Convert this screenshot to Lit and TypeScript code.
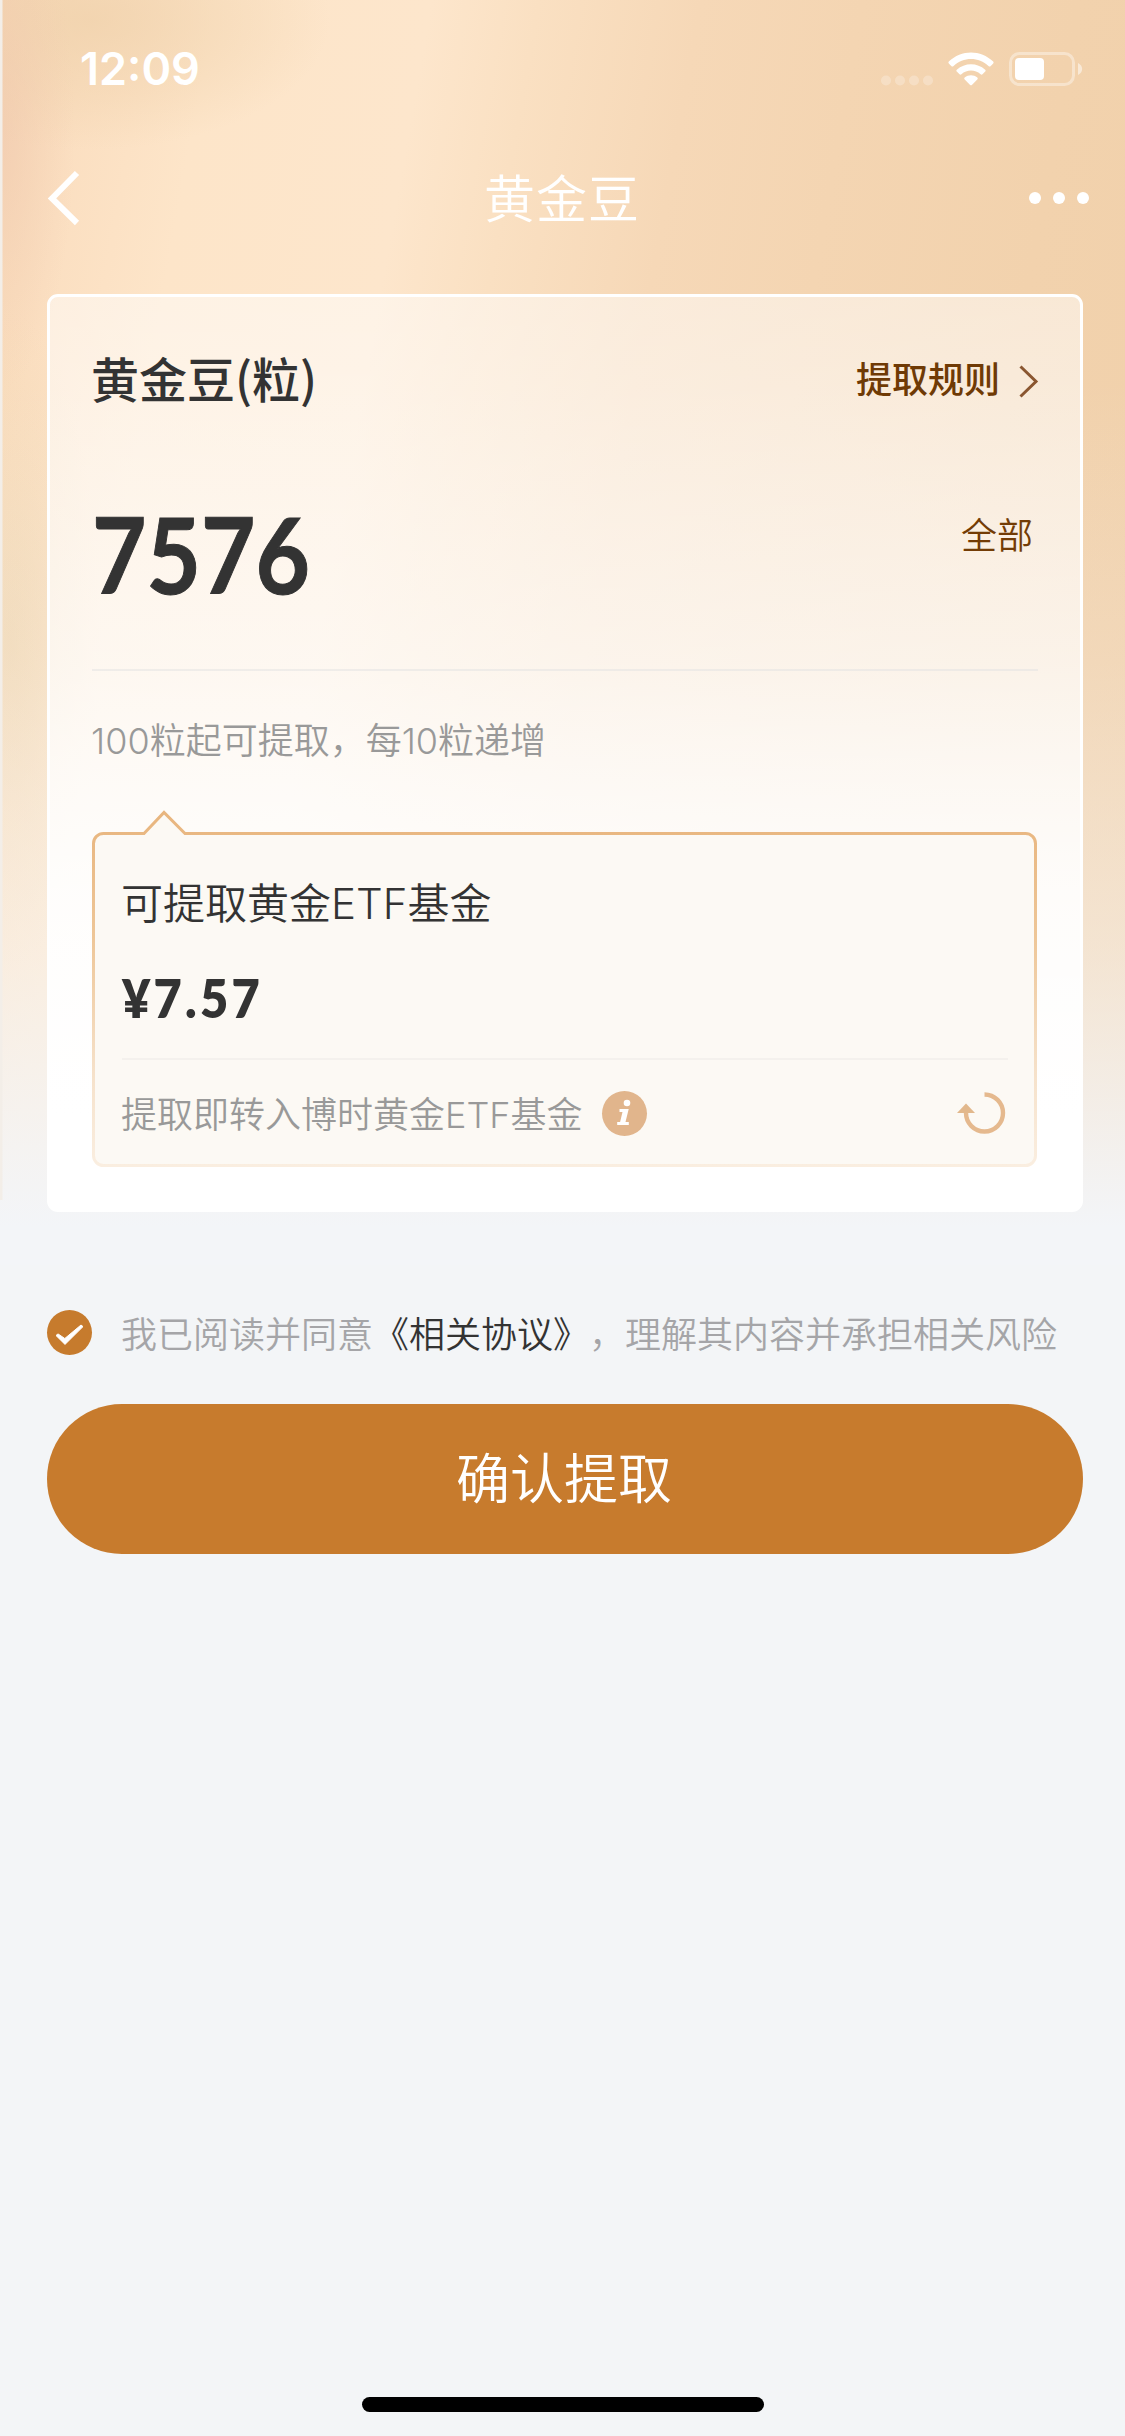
import { LitElement, html, css, svg } from "lit";
import { customElement, property } from "lit/decorators.js";

const icons = {
  cell: svg`<g fill="#fff" opacity=".25"><circle cx="5" cy="28.500" r="5"/><circle cx="19" cy="28.500" r="5"/><circle cx="33" cy="28.500" r="5"/><circle cx="47" cy="28.500" r="5"/></g>`,
  wifi: svg`<g fill="#fff"><path d="M.8 9.600C13.200-2.700 32.800-2.700 45.200 9.600q.9 1 0 1.900l-2.700 2.700q-.9.8-1.800 0C30.600 4.700 15.400 4.700 5.300 14.200q-.9.8-1.800 0L.8 11.500q-.9-.9 0-1.900z"/><path d="M8.800 17.700c8-7.400 20.400-7.400 28.400 0 .6.600.6 1.300 0 1.900l-2.700 2.600c-.6.600-1.300.6-1.900 0-5.500-4.900-13.700-4.900-19.200 0-.6.600-1.300.6-1.900 0l-2.700-2.600c-.6-.6-.6-1.300 0-1.900z"/><path d="M16.700 25.600c3.600-3 9-3 12.600 0 .6.500.6 1.300 0 1.900l-5.400 5.400c-.6.600-1.200.6-1.800 0l-5.400-5.400c-.6-.6-.6-1.400 0-1.900z"/></g>`,
  battery: svg`<rect x="1.500" y="1.500" width="63" height="31" rx="9" fill="none" stroke="#fff" stroke-width="3" opacity=".38"/><rect x="6" y="6" width="29" height="22" rx="4" fill="#fff"/><path d="M69 11c5.500 2.500 5.500 9.500 0 12z" fill="#fff" opacity=".5"/>`,
  back: svg`<path d="M29 2L4 27.500 29 52" fill="none" stroke="#fff" stroke-width="6"/>`,
  more: svg`<g fill="#fff"><circle cx="6" cy="6" r="6"/><circle cx="30" cy="6" r="6"/><circle cx="54" cy="6" r="6"/></g>`,
  arrow: svg`<path d="M1.500 1.500L17 16.500 1.500 31.500" fill="none" stroke="#8a5630" stroke-width="3"/>`,
  info: svg`<circle cx="22.500" cy="22.500" r="22.500" fill="#e1b58c"/><circle cx="25" cy="12" r="3.300" fill="#fff"/><path d="M17.500 18h9.200l-3.200 13h3.300v3H15.200v-3h2.900l2.400-10h-3z" fill="#fff"/>`,
  refresh: svg`<path d="M27.500 2.500A18.500 18.500 0 1 1 9 21" fill="none" stroke="#e5b98e" stroke-width="4.400"/><path d="M0 21L9 11.500 18 21z" fill="#e2b88c"/>`,
  check: svg`<circle cx="22.500" cy="22.500" r="22.500" fill="#c67b2d"/><path d="M9 25.500l2-1.600 6.800 4.600L34 15l2 1.600L18 34.400z" fill="#fff" stroke="#fff" stroke-width="1" stroke-linejoin="round"/>`,
  bubble: svg`<defs><linearGradient id="edge" x1="0" y1="0" x2="0" y2="1"><stop offset="0" stop-color="#e8b57e"/><stop offset=".35" stop-color="#eec697"/><stop offset=".75" stop-color="#f6e2cb"/><stop offset="1" stop-color="#faeee0"/></linearGradient></defs><path d="M11.500 22.500H52L72 1.500 93 22.500H933.500a10 10 0 0 1 10 10V344.500a10 10 0 0 1-10 10H11.500a10 10 0 0 1-10-10V32.500a10 10 0 0 1 10-10z" fill="#fcf9f4" stroke="url(#edge)" stroke-width="3"/>`,
};

type IconName = keyof typeof icons;

@customElement("ui-icon")
export class UiIcon extends LitElement {
  static styles = css`
    :host { display: block; flex: none; line-height: 0; }
    .glyph { display: block; overflow: visible; }
  `;
  @property() name: IconName = "back";
  @property({ type: Number }) w = 24;
  @property({ type: Number }) h = 24;

  render() {
    return html`<svg class="glyph" width=${this.w} height=${this.h} viewBox="0 0 ${this.w} ${this.h}">${icons[this.name]}</svg>`;
  }
}

@customElement("app-root")
export class AppRoot extends LitElement {
  static styles = css`
    :host {
      display: block;
      font-family: Inter, "Noto Sans CJK SC", sans-serif;
      color: #333;
    }
    * { box-sizing: border-box; }
    .screen {
      width: 1125px;
      height: 2436px;
      overflow: hidden;
      display: flex;
      flex-direction: column;
      background:
        linear-gradient(90deg, #f3eee8 0 2px, transparent 3px) 0 0 / 100% 1200px no-repeat,
        linear-gradient(180deg, rgba(243, 245, 247, 0) 30%, rgba(246, 243, 240, .2) 52%, rgba(247, 246, 245, .52) 75%, #f3f5f8 97%) 0 0 / 100% 1265px no-repeat,
        radial-gradient(75px 260px at 0 130px, rgba(240, 200, 174, .6), rgba(240, 200, 174, .25) 55%, transparent) no-repeat,
        radial-gradient(240px 130px at 90px 20px, rgba(240, 210, 172, .8), rgba(240, 210, 172, .4) 55%, transparent) no-repeat,
        radial-gradient(90px 330px at 10px 640px, rgba(234, 211, 172, .6), rgba(234, 211, 172, .2) 60%, transparent) no-repeat,
        linear-gradient(100deg, #f7d8b6 0, #fbdfc1 7%, #fde5c9 16%, #fde6cc 32%, #fae0c2 40%, #f6d8b7 52%, #f4d5b2 64%, #f2d2ad 80%, #f0d0aa 100%) 0 0 / 100% 1265px no-repeat,
        #f3f5f7;
    }
    .status {
      height: 118px;
      flex: none;
      display: flex;
      align-items: flex-start;
      padding: 52px 43px 0 80px;
      color: #fff;
    }
    .time {
      font-size: 45px;
      font-weight: 600;
      line-height: 34px;
      letter-spacing: 0;
      margin-right: auto;
    }
    .signals { display: flex; }
    .wifi { margin: 0 15px 0 15px; }
    .nav {
      height: 160px;
      flex: none;
      display: grid;
      grid-template-columns: 60px 1fr 60px;
      align-items: center;
      padding: 0 36px 0 48px;
      color: #fff;
    }
    .nav-title {
      font-size: 51px;
      font-weight: 350;
      line-height: 72px;
      text-align: center;
      letter-spacing: 1px;
      padding: 4px 13px 0 0;
    }
    .card {
      flex: none;
      width: 1036px;
      height: 918px;
      margin: 16px 0 0 47px;
      border: 3px solid #fff;
      border-radius: 11px;
      padding: 0 42px;
      display: flex;
      flex-direction: column;
      background: linear-gradient(180deg, rgba(255, 255, 255, .5) 0, rgba(255, 255, 255, .68) 40%, rgba(255, 255, 255, .9) 65%, #fff 90%);
    }
    .card-head {
      display: flex;
      justify-content: space-between;
      align-items: center;
      height: 72px;
      margin-top: 48px;
    }
    .card-title {
      font-family: "Noto Sans CJK SC", sans-serif;
      font-size: 48px;
      font-weight: 500;
      line-height: 72px;
      margin: -8px 0 0 -1px;
    }
    .rules {
      display: flex;
      align-items: center;
      gap: 19px;
      font-size: 36px;
      font-weight: 500;
      color: #6f3a05;
    }
    .rules-text { line-height: 54px; padding-bottom: 2px; }
    .balance {
      display: flex;
      justify-content: space-between;
      align-items: flex-start;
      height: 254px;
      padding: 73px 5px 0 0;
      border-bottom: 2px solid rgba(225, 225, 225, .5);
    }
    .amount {
      font-family: Lato, sans-serif;
      font-size: 105px;
      font-weight: 700;
      line-height: 126px;
      -webkit-text-stroke: 1px #333;
      transform: scaleX(.895);
      transform-origin: 0 0;
    }
    .all { font-size: 36px; font-weight: 350; line-height: 54px; margin-top: 19px; color: #733c05; }
    .hint { font-size: 36px; font-weight: 350; line-height: 54px; margin: 43px 0 0 -1px; color: #999; }
    .bubble {
      display: grid;
      width: 946px;
      height: 357px;
      margin-top: 43px;
    }
    .frame, .bubble-body { grid-area: 1 / 1; }
    .bubble-body {
      position: relative;
      display: flex;
      flex-direction: column;
      padding: 63px 30px 0;
    }
    .fund { font-size: 42px; font-weight: 350; line-height: 60px; margin-left: -1px; }
    .price {
      font-family: Lato, sans-serif;
      font-size: 53px;
      font-weight: 800;
      line-height: 64px;
      margin-top: 32px;
      letter-spacing: 3.500px;
      transform: scaleX(.92);
      transform-origin: 0 0;
    }
    .transfer {
      display: flex;
      align-items: center;
      margin-top: 28px;
      padding: 0 3px 0 0;
      height: 108px;
      border-top: 2px solid #f4f1ed;
      font-size: 36px;
      font-weight: 350;
      color: #999;
    }
    .transfer-text { margin-left: -1px; padding-bottom: 2px; }
    .info { margin-left: 19px; margin-right: auto; }
    .agreement {
      flex: none;
      display: flex;
      align-items: center;
      gap: 29px;
      height: 54px;
      margin: 93px 0 0 47px;
      font-size: 36px;
      font-weight: 350;
      color: #a5a5a8;
      white-space: nowrap;
      text-spacing-trim: space-all;
    }
    .terms { color: #333; }
    .confirm {
      flex: none;
      width: 1036px;
      height: 150px;
      margin: 45px 0 0 47px;
      padding: 2px 2px 0 0;
      border: 0;
      border-radius: 75px;
      background: #c77b2d;
      color: #fff;
      font: 350 54px/80px Inter, "Noto Sans CJK SC", sans-serif;
    }
    .home {
      flex: none;
      width: 402px;
      height: 15px;
      border-radius: 8px;
      background: #000;
      margin: auto auto 24px 362px;
    }
  `;

  render() {
    return html`
      <main class="screen">
        <div class="status">
          <span class="time">12:09</span>
          <div class="signals">
            <ui-icon name="cell" w="52" h="34"></ui-icon>
            <ui-icon class="wifi" name="wifi" w="46" h="34"></ui-icon>
            <ui-icon name="battery" w="73" h="34"></ui-icon>
          </div>
        </div>
        <header class="nav">
          <ui-icon name="back" w="32" h="54"></ui-icon>
          <span class="nav-title">黄金豆</span>
          <ui-icon name="more" w="60" h="12"></ui-icon>
        </header>
        <section class="card">
          <div class="card-head">
            <span class="card-title">黄金豆(粒)</span>
            <span class="rules"><span class="rules-text">提取规则</span><ui-icon name="arrow" w="19" h="33"></ui-icon></span>
          </div>
          <div class="balance">
            <span class="amount">7576</span>
            <span class="all">全部</span>
          </div>
          <div class="hint">100粒起可提取，每10粒递增</div>
          <div class="bubble">
            <ui-icon class="frame" name="bubble" w="946" h="357"></ui-icon>
            <div class="bubble-body">
              <div class="fund">可提取黄金ETF基金</div>
              <div class="price">¥7.57</div>
              <div class="transfer">
                <span class="transfer-text">提取即转入博时黄金ETF基金</span>
                <ui-icon class="info" name="info" w="45" h="45"></ui-icon>
                <ui-icon name="refresh" w="48" h="42"></ui-icon>
              </div>
            </div>
          </div>
        </section>
        <div class="agreement">
          <ui-icon name="check" w="45" h="45"></ui-icon>
          <span>我已阅读并同意<span class="terms">《相关协议》</span>，理解其内容并承担相关风险</span>
        </div>
        <button class="confirm">确认提取</button>
        <div class="home"></div>
      </main>
    `;
  }
}
